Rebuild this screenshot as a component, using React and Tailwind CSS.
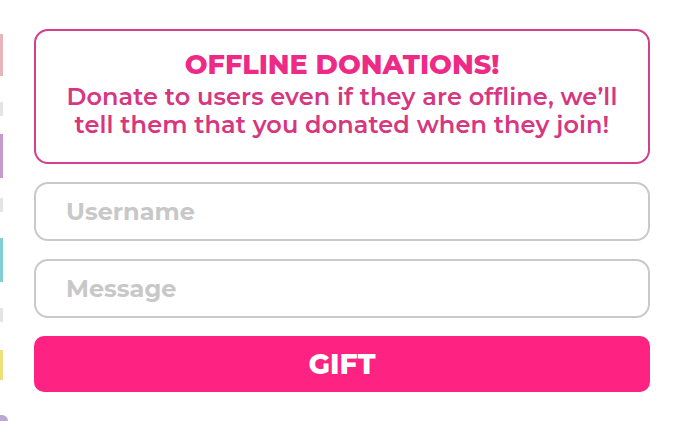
export default function App() {
  return (
    <div className="relative w-[679px] h-[421px] bg-white overflow-hidden font-['Montserrat','Noto_Sans',sans-serif]">
      {/* slivers of the page behind the panel */}
      <div className="absolute left-0 top-0 h-[421px] w-[3px] flex flex-col">
        <div className="h-[34px]" />
        <div className="h-[42px] bg-[#e8b4b8]" />
        <div className="h-[26px]" />
        <div className="h-[14px] bg-[#e4e4e4]" />
        <div className="h-[18px]" />
        <div className="h-[44px] bg-[#c79acb]" />
        <div className="h-[20px]" />
        <div className="h-[14px] bg-[#e4e4e4]" />
        <div className="h-[26px]" />
        <div className="h-[44px] bg-[#7fcfd3]" />
        <div className="h-[26px]" />
        <div className="h-[14px] bg-[#e4e4e4]" />
        <div className="h-[28px]" />
        <div className="h-[30px] bg-[#ece07a]" />
      </div>
      <div className="absolute left-0 bottom-0 w-[8px] h-[6px] bg-[#b9a8d4] rounded-tr-full" />

      <div className="flex flex-col w-[616px] ml-[34px] pt-[29px] gap-[18px]">
        <div className="h-[135px] rounded-[14px] border-2 border-[#d43f8b] flex flex-col items-center justify-center pb-[5px]">
          <h1 className="mb-[3px] text-[27px] leading-[30px] font-extrabold text-[#ee2a87]">
            OFFLINE DONATIONS!
          </h1>
          <p className="text-center text-[24px] leading-[28px] tracking-[0.1px] font-semibold text-[#d6377f]">
            Donate to users even if they are offline, we’ll
            <br />
            tell them that you donated when they join!
          </p>
        </div>

        <div className="h-[59px] rounded-[14px] border-2 border-[#c9c9c9] flex items-center px-[30px]">
          <span className="text-[24px] font-bold text-[#c8c8c8]">Username</span>
        </div>

        <div className="h-[59px] rounded-[14px] border-2 border-[#c9c9c9] flex items-center px-[30px]">
          <span className="text-[24px] font-bold text-[#c8c8c8]">Message</span>
        </div>

        <button className="h-[56px] rounded-[10px] bg-[#fe2282] flex items-center justify-center">
          <span className="text-[28px] font-extrabold text-white">GIFT</span>
        </button>
      </div>
    </div>
  );
}
